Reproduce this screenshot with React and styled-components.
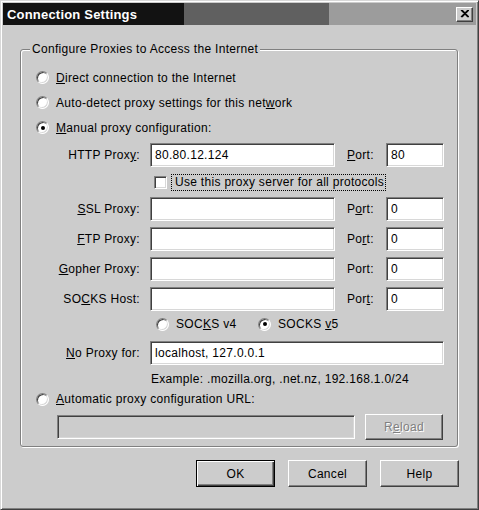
import styled, { createGlobalStyle } from "styled-components";

const GlobalStyle = createGlobalStyle`
  html, body {
    margin: 0;
    padding: 0;
    background: #cccccc;
  }
  * {
    box-sizing: border-box;
  }
`;

const Window = styled.div`
  width: 479px;
  height: 510px;
  display: flex;
  flex-direction: column;
  padding: 2px;
  background: #cccccc;
  border: 1px solid;
  border-color: #d8d8d8 #404040 #404040 #d8d8d8;
  box-shadow: inset 1px 1px 0 #ffffff, inset -1px -1px 0 #808080;
  font-family: "Liberation Sans", Arial, sans-serif;
  font-size: 12px;
  letter-spacing: 0.3px;
  color: #000;
`;

const TitleBar = styled.div`
  height: 22px;
  display: flex;
  align-items: center;
  justify-content: space-between;
  padding: 0 3px 0 4px;
  background: linear-gradient(
    to right,
    #121212 0 181px,
    #606060 181px 326px,
    #9c9c9c 326px
  );
`;

const TitleText = styled.span`
  color: #fff;
  font-weight: bold;
  font-size: 13px;
  letter-spacing: 0.2px;
`;

const CloseButton = styled.div`
  width: 17px;
  height: 15px;
  display: flex;
  align-items: center;
  justify-content: center;
  background: #cccccc;
  border: 1px solid;
  border-color: #ffffff #404040 #404040 #ffffff;
  box-shadow: inset -1px -1px 0 #808080;
`;

const Body = styled.div`
  flex: 1;
  display: flex;
  flex-direction: column;
  padding: 24px 18px 0 17px;
`;

const GroupBox = styled.div`
  display: flex;
  flex-direction: column;
  border: 1px solid #808080;
  border-radius: 3px;
  box-shadow: inset 1px 1px 0 #ffffff, 1px 1px 0 #ffffff;
  padding-bottom: 7px;
`;

const Legend = styled.div`
  align-self: flex-start;
  height: 14px;
  line-height: 14px;
  margin: -8px 0 0 9px;
  padding: 0 2px;
  background: #cccccc;
`;

const RadioRow = styled.div`
  height: ${(p) => p.$height || 25}px;
  display: flex;
  align-items: center;
  gap: 7px;
  padding-left: ${(p) => p.$indent || 15}px;
  margin-top: ${(p) => p.$top || 0}px;
`;

const RadioCircle = styled.span`
  width: 13px;
  height: 13px;
  flex: none;
  border-radius: 50%;
  background: #ffffff;
  border: 1px solid;
  border-color: #808080 #ffffff #ffffff #808080;
  box-shadow: inset 1px 1px 0 #404040, inset -1px -1px 0 #d8d8d8;
  display: flex;
  align-items: center;
  justify-content: center;

  &::after {
    content: "";
    width: 4px;
    height: 4px;
    border-radius: 50%;
    background: ${(p) => (p.$checked ? "#000" : "transparent")};
  }
`;

const RadioOption = styled.span`
  display: flex;
  align-items: center;
  gap: 7px;
  width: ${(p) => (p.$width ? `${p.$width}px` : "auto")};
`;

const Key = styled.span`
  text-decoration: underline;
`;

const FieldRow = styled.div`
  height: 24px;
  display: flex;
  align-items: center;
  margin-top: ${(p) => p.$top ?? 6}px;
`;

const FieldLabel = styled.span`
  width: 119px;
  margin-right: 10px;
  text-align: right;
  white-space: nowrap;
`;

const PortLabel = styled.span`
  width: 39px;
  margin-left: 12px;
`;

const TextInput = styled.input`
  width: ${(p) => p.$width}px;
  height: ${(p) => p.$height || 24}px;
  padding: 0 4px;
  font: inherit;
  letter-spacing: inherit;
  color: #000;
  background: ${(p) => (p.disabled ? "#cccccc" : "#ffffff")};
  border: 1px solid;
  border-color: #808080 #ffffff #ffffff #808080;
  box-shadow: inset 1px 1px 0 #404040, inset -1px -1px 0 #d8d8d8;
  outline: none;
`;

const CheckRow = styled.div`
  height: 18px;
  display: flex;
  align-items: center;
  gap: 4px;
  padding-left: 133px;
  margin-top: 6px;
`;

const CheckBox = styled.span`
  width: 13px;
  height: 13px;
  flex: none;
  background: #ffffff;
  border: 1px solid;
  border-color: #808080 #ffffff #ffffff #808080;
  box-shadow: inset 1px 1px 0 #404040, inset -1px -1px 0 #d8d8d8;
`;

const FocusLabel = styled.span`
  padding: 1px 1px 1px 3px;
  border: 1px dotted #000;
  line-height: 13px;
`;

const HintRow = styled.div`
  height: 16px;
  line-height: 16px;
  padding-left: 130px;
  margin-top: 6px;
`;

const UrlRow = styled.div`
  height: 24px;
  display: flex;
  align-items: center;
  gap: 10px;
  padding-left: 36px;
  margin-top: 4px;
`;

const Button = styled.div`
  width: ${(p) => p.$width || 79}px;
  height: ${(p) => p.$height || 27}px;
  display: flex;
  align-items: center;
  justify-content: center;
  background: #cccccc;
  border: 1px solid;
  border-color: ${(p) =>
    p.$default ? "#000" : "#ffffff #404040 #404040 #ffffff"};
  box-shadow: ${(p) =>
    p.$default
      ? "inset 1px 1px 0 #fff, inset -1px -1px 0 #404040, inset -2px -2px 0 #808080"
      : "inset -1px -1px 0 #808080"};
  color: ${(p) => (p.$disabled ? "#808080" : "#000")};
  text-shadow: ${(p) => (p.$disabled ? "1px 1px 0 #fff" : "none")};
`;

const ButtonRow = styled.div`
  display: flex;
  justify-content: flex-end;
  gap: 13px;
  margin: 13px -1px 0 0;
`;

const CloseIcon = () => (
  <svg width="9" height="8" viewBox="0 0 9 8">
    <path d="M1 0 L8 7 M2 0 L9 7 M8 0 L1 7 M9 0 L2 7" stroke="#000" strokeWidth="1.2" />
  </svg>
);

export default function App() {
  return (
    <>
      <GlobalStyle />
      <Window>
        <TitleBar>
          <TitleText>Connection Settings</TitleText>
          <CloseButton>
            <CloseIcon />
          </CloseButton>
        </TitleBar>
        <Body>
          <GroupBox>
            <Legend>Configure Proxies to Access the Internet</Legend>
            <RadioRow $top={9}>
              <RadioCircle />
              <span>
                <Key>D</Key>irect connection to the Internet
              </span>
            </RadioRow>
            <RadioRow>
              <RadioCircle />
              <span>
                Auto-detect proxy settings for this net<Key>w</Key>ork
              </span>
            </RadioRow>
            <RadioRow>
              <RadioCircle $checked />
              <span>
                <Key>M</Key>anual proxy configuration:
              </span>
            </RadioRow>

            <FieldRow $top={3}>
              <FieldLabel>
                HTTP Prox<Key>y</Key>:
              </FieldLabel>
              <TextInput $width={185} readOnly defaultValue="80.80.12.124" />
              <PortLabel>
                <Key>P</Key>ort:
              </PortLabel>
              <TextInput $width={58} readOnly defaultValue="80" />
            </FieldRow>
            <CheckRow>
              <CheckBox />
              <FocusLabel>Use this proxy server for all protocols</FocusLabel>
            </CheckRow>
            <FieldRow>
              <FieldLabel>
                <Key>S</Key>SL Proxy:
              </FieldLabel>
              <TextInput $width={185} readOnly defaultValue="" />
              <PortLabel>
                P<Key>o</Key>rt:
              </PortLabel>
              <TextInput $width={58} readOnly defaultValue="0" />
            </FieldRow>
            <FieldRow>
              <FieldLabel>
                <Key>F</Key>TP Proxy:
              </FieldLabel>
              <TextInput $width={185} readOnly defaultValue="" />
              <PortLabel>
                Po<Key>r</Key>t:
              </PortLabel>
              <TextInput $width={58} readOnly defaultValue="0" />
            </FieldRow>
            <FieldRow>
              <FieldLabel>
                <Key>G</Key>opher Proxy:
              </FieldLabel>
              <TextInput $width={185} readOnly defaultValue="" />
              <PortLabel>Port:</PortLabel>
              <TextInput $width={58} readOnly defaultValue="0" />
            </FieldRow>
            <FieldRow>
              <FieldLabel>
                SO<Key>C</Key>KS Host:
              </FieldLabel>
              <TextInput $width={185} readOnly defaultValue="" />
              <PortLabel>
                Por<Key>t</Key>:
              </PortLabel>
              <TextInput $width={58} readOnly defaultValue="0" />
            </FieldRow>

            <RadioRow $height={22} $indent={135} $top={2}>
              <RadioOption $width={95}>
                <RadioCircle />
                <span>
                  SOC<Key>K</Key>S v4
                </span>
              </RadioOption>
              <RadioOption>
                <RadioCircle $checked />
                <span>
                  SOCKS <Key>v</Key>5
                </span>
              </RadioOption>
            </RadioRow>

            <FieldRow $top={6}>
              <FieldLabel>
                <Key>N</Key>o Proxy for:
              </FieldLabel>
              <TextInput $width={294} readOnly defaultValue="localhost, 127.0.0.1" />
            </FieldRow>
            <HintRow>Example: .mozilla.org, .net.nz, 192.168.1.0/24</HintRow>

            <RadioRow $height={24}>
              <RadioCircle />
              <span>
                <Key>A</Key>utomatic proxy configuration URL:
              </span>
            </RadioRow>
            <UrlRow>
              <TextInput $width={298} disabled readOnly defaultValue="" />
              <Button $width={78} $height={26} $disabled>
                <span>
                  R<Key>e</Key>load
                </span>
              </Button>
            </UrlRow>
          </GroupBox>

          <ButtonRow>
            <Button $default>OK</Button>
            <Button>Cancel</Button>
            <Button>Help</Button>
          </ButtonRow>
        </Body>
      </Window>
    </>
  );
}
